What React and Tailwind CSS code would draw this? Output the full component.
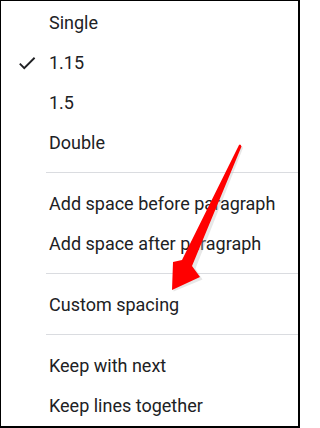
import React from 'react'

const Row = ({ label, checked }) => (
  <div className="relative flex h-10 items-center pl-[48px]">
    {checked && (
      <svg viewBox="0 0 24 24" className="absolute left-[15px] top-[10px] h-[22px] w-[22px]" fill="#202124">
        <path d="M9 16.17L4.83 12l-1.42 1.41L9 19 21 7l-1.41-1.41z" />
      </svg>
    )}
    <span>{label}</span>
  </div>
)

const Divider = () => <div className="ml-[45px] mt-[10px] mb-[10px] h-px bg-[#dadce0]" />

const App = () => {
  return (
    <div
      className="relative h-[428px] w-[300px] overflow-hidden border-t border-l border-r-2 border-b-2 border-black bg-white pt-[1px] text-[18px] text-[#202124]"
      style={{ fontFamily: 'Roboto, "Noto Sans", sans-serif' }}
    >
      <Row label="Single" />
      <Row label="1.15" checked />
      <Row label="1.5" />
      <Row label="Double" />
      <Divider />
      <Row label="Add space before paragraph" />
      <Row label="Add space after paragraph" />
      <Divider />
      <Row label="Custom spacing" />
      <Divider />
      <Row label="Keep with next" />
      <Row label="Keep lines together" />

      {/* red arrow pointing at Custom spacing */}
      <svg className="pointer-events-none absolute left-0 top-0" width="300" height="428" viewBox="0 0 300 428">
        <path
          d="M240.5 145.5 L193 266 L200 277 L171 289 L172 261 L181 259 L238 144 Q239.5 142.5 240.5 145.5 Z"
          fill="#bbbbbb"
          opacity="0.35"
          transform="translate(1.5 1.5)"
        />
        <path
          d="M240.5 145.5 L191 265 L199 276 L171 289 L172 261 L181 259 L238 144 Q239.5 142.5 240.5 145.5 Z"
          fill="#ff0000"
        />
      </svg>
    </div>
  )
}

export default App
